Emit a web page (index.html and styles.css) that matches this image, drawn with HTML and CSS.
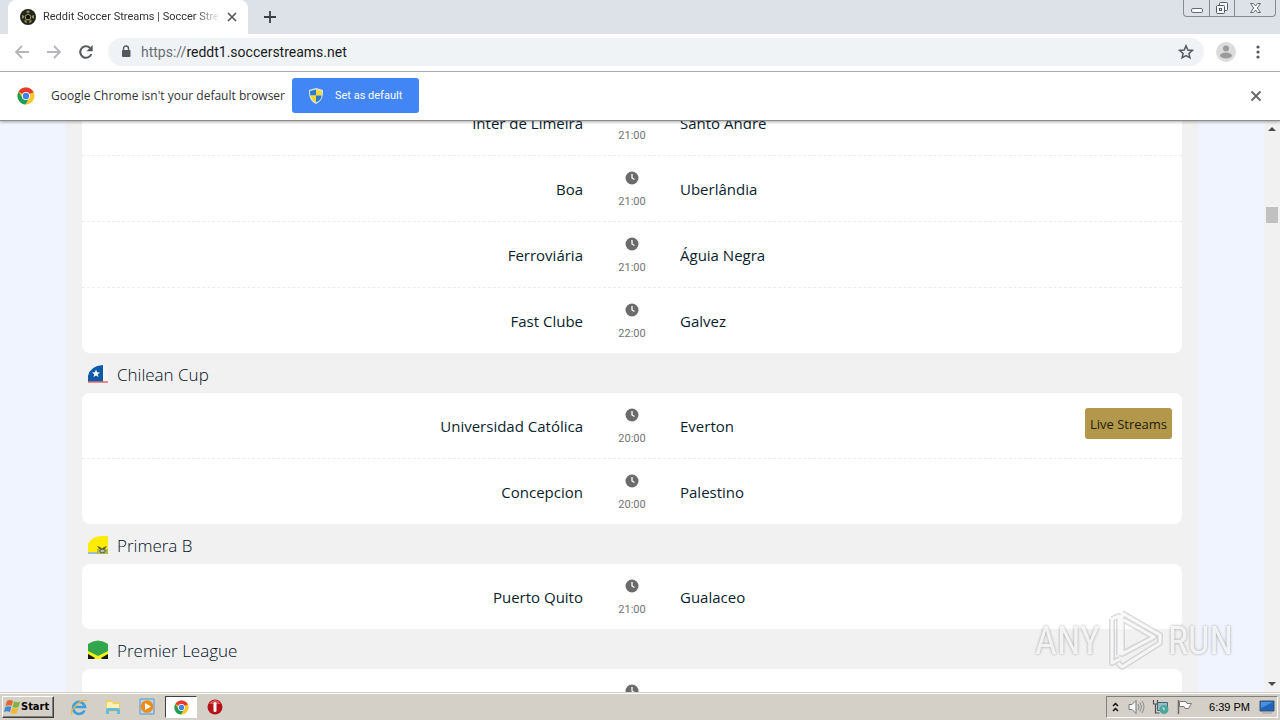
FILE: index.html
```html
<!DOCTYPE html>
<html lang="en">
<head>
<meta charset="utf-8">
<title>Reddit Soccer Streams</title>
<link rel="stylesheet" href="styles.css">
</head>
<body>
<svg class="defs" aria-hidden="true">
  <symbol id="clock" viewBox="0 0 14 14"><circle cx="7" cy="7" r="6.5" fill="#6b6b6b"/><path d="M7 3v4l2.5 1.5" fill="none" stroke="#fff" stroke-width="1.3"/></symbol>
  <symbol id="chrome" viewBox="0 0 18 18"><circle cx="9" cy="9" r="8.5" fill="#fbc52d"/><path d="M9 9L1.6 4.8A8.5 8.5 0 0 1 16.4 5z" fill="#e53a2f"/><path d="M1.6 4.8A8.5 8.5 0 0 0 8.5 17.5L12 11 5.5 11z" fill="#1d9d55"/><path d="M9 5h7.4" stroke="#e53a2f"/><circle cx="9" cy="9" r="4.1" fill="#fff"/><circle cx="9" cy="9" r="3.2" fill="#3f83ee"/></symbol>
</svg>
<div class="screen">
  <header class="tabstrip">
    <div class="tab">
      <svg width="16" height="16" viewBox="0 0 16 16"><circle cx="8" cy="8" r="8" fill="#24251d"/><g fill="#8d8b58"><path d="M8 1.500l2 1.300-2 1.400-2-1.400zM2 6l2 .8v2L2 9.800zM14 6l-2 .8v2l2 1zM4.500 11l2 .5.500 2.500-2.500-1zM11.500 11l-2 .5L9 14l2.500-1z"/></g><path d="M8 5l3 2.200-1.100 3.500H6.100L5 7.200z" fill="#111" stroke="#aaa463"/></svg>
      <span class="tab-title">Reddit Soccer Streams | Soccer Stre</span>
      <button class="icon-btn" aria-label="Close tab"><svg width="10" height="10" viewBox="0 0 10 10"><path d="M1 1l8 8M9 1L1 9" stroke="#55595d" stroke-width="1.7"/></svg></button>
    </div>
    <button class="icon-btn new-tab" aria-label="New tab"><svg width="12" height="12" viewBox="0 0 12 12"><path d="M6 0v12M0 6h12" stroke="#3c4043" stroke-width="1.8"/></svg></button>
    <div class="win-controls">
      <button aria-label="Minimize"><svg width="14" height="12" viewBox="0 0 14 12"><rect x="1.500" y="6.500" width="11" height="4" rx="1.500" fill="#fff" stroke="#666b73"/></svg></button>
      <button aria-label="Restore"><svg width="14" height="14" viewBox="0 0 14 14"><g fill="#f5f6f8" stroke="#555b66"><rect x="4.500" y="1.500" width="8" height="8" rx="1"/><rect x="1.500" y="4.500" width="8" height="8" rx="1"/><rect x="4.500" y="7.500" width="2" height="2"/></g></svg></button>
      <button class="wide" aria-label="Close"><svg width="13" height="12" viewBox="0 0 13 12"><path d="M1.500 1.500h3l2 2.500 2-2.500h3L8.300 6l3.200 4.500h-3l-2-2.500-2 2.500h-3L4.700 6z" fill="#fff" stroke="#666b73"/></svg></button>
    </div>
  </header>
  <nav class="toolbar">
    <div class="nav-buttons">
      <button class="icon-btn" aria-label="Back"><svg width="16" height="16" viewBox="0 0 16 16"><path d="M15 8H2M8 2L2 8l6 6" fill="none" stroke="#b4b6b9" stroke-width="1.8"/></svg></button>
      <button class="icon-btn" aria-label="Forward"><svg width="16" height="16" viewBox="0 0 16 16"><path d="M1 8h13M8 2l6 6-6 6" fill="none" stroke="#b4b6b9" stroke-width="1.800"/></svg></button>
      <button class="icon-btn" aria-label="Reload"><svg width="16" height="16" viewBox="0 0 16 16"><path d="M13.300 10A5.700 5.700 0 1 1 12 4" fill="none" stroke="#55595d" stroke-width="2"/><path d="M14.700 1v6.200H8.500z" fill="#55595d"/></svg></button>
    </div>
    <div class="omnibox">
      <svg width="10" height="13" viewBox="0 0 10 13"><path d="M2.500 6V3.500a2.500 2.500 0 0 1 5 0V6" fill="none" stroke="#55595d" stroke-width="1.400"/><rect x="1" y="5" width="8.500" height="7" rx="1" fill="#55595d"/></svg>
      <span class="url"><span class="scheme">https://</span>reddt1.soccerstreams.net</span>
      <button class="icon-btn" aria-label="Bookmark"><svg width="16" height="16" viewBox="0 0 16 16"><path d="M8 1.800l1.800 4.200 4.500.4-3.400 3 1 4.400L8 11.500l-3.900 2.300 1-4.400-3.400-3 4.500-.4z" fill="none" stroke="#55595d" stroke-width="1.500"/></svg></button>
    </div>
    <button class="icon-btn" aria-label="Profile"><svg width="20" height="20" viewBox="0 0 20 20"><circle cx="10" cy="10" r="10" fill="#dcdcdc"/><circle cx="10" cy="6.500" r="3" fill="#9b9b9b"/><ellipse cx="10" cy="13.500" rx="6" ry="3" fill="#9b9b9b"/></svg></button>
    <button class="icon-btn" aria-label="Menu"><svg width="4" height="16" viewBox="0 0 4 16"><g fill="#55595d"><circle cx="2" cy="3" r="1.600"/><circle cx="2" cy="8" r="1.600"/><circle cx="2" cy="13" r="1.600"/></g></svg></button>
  </nav>
  <section class="infobar">
    <svg width="18" height="18"><use href="#chrome"/></svg>
    <span class="info-text">Google Chrome isn't your default browser</span>
    <button class="set-default"><svg width="14" height="16" viewBox="0 0 14 16"><path d="M7 0l7 2c0 7-1 11-7 14C1 13 0 9 0 2z" fill="#dce7ee"/><path d="M7 1.500v6H1.300L1 3z" fill="#2f7cc6"/><path d="M7 1.500L13 3l-.3 4.500H7z" fill="#f5d936"/><path d="M7 7.500v7C3 12.500 1.800 10.500 1.300 7.500z" fill="#f5d936"/><path d="M7 7.500h5.700c-.5 3-1.700 5-5.700 7z" fill="#2f7cc6"/></svg>Set as default</button>
    <button class="icon-btn dismiss" aria-label="Dismiss"><svg width="12" height="12" viewBox="0 0 12 12"><path d="M1.500 1.500l9 9M10.500 1.500l-9 9" stroke="#66696c" stroke-width="1.900"/></svg></button>
  </section>
  <div class="viewport">
    <main class="page">
      <ul class="card first">
        <li class="match"><a class="home" href="#">Inter de Limeira</a><span class="time"><svg><use href="#clock"/></svg>21:00</span><a class="away" href="#">Santo André</a></li>
        <li class="match"><a class="home" href="#">Boa</a><span class="time"><svg><use href="#clock"/></svg>21:00</span><a class="away" href="#">Uberlândia</a></li>
        <li class="match"><a class="home" href="#">Ferroviária</a><span class="time"><svg><use href="#clock"/></svg>21:00</span><a class="away" href="#">Águia Negra</a></li>
        <li class="match"><a class="home" href="#">Fast Clube</a><span class="time"><svg><use href="#clock"/></svg>22:00</span><a class="away" href="#">Galvez</a></li>
      </ul>
      <h2><svg width="20" height="20" viewBox="0 0 20 20"><path d="M0 18V12Q2 2 15 1v17z" fill="#0c5aa8"/><path d="M8 5.500l1.100 2.700 2.900.2-2.200 1.900.7 2.800L8 11.600l-2.500 1.500.7-2.800L4 8.400l2.900-.2z" fill="#fff"/><path d="M15 0h5v18h-5z" fill="#f5f5f5"/><path d="M0 18h20" stroke="#e36a69" stroke-width="1.500"/></svg>Chilean Cup</h2>
      <ul class="card">
        <li class="match"><a class="home" href="#">Universidad Católica</a><span class="time"><svg><use href="#clock"/></svg>20:00</span><div class="away-cell"><a class="away" href="#">Everton</a><a class="live" href="#">Live Streams</a></div></li>
        <li class="match"><a class="home" href="#">Concepcion</a><span class="time"><svg><use href="#clock"/></svg>20:00</span><a class="away" href="#">Palestino</a></li>
      </ul>
      <h2><svg width="20" height="20" viewBox="0 0 20 20"><path d="M0 17V9Q4 1 14 1h6v16z" fill="#fcec08"/><path d="M0 17.500h9v1H0z" fill="#4e8aa0"/><path d="M9 14h11v5H9z" fill="#b5b848"/><path d="M9 11l3 1 2 1.500 2-1.500 3-1-2 3h-6z" fill="#766019"/><ellipse cx="14.500" cy="16" rx="2.800" ry="1.800" fill="#a4c8b1" stroke="#4d6141"/></svg>Primera B</h2>
      <ul class="card">
        <li class="match"><a class="home" href="#">Puerto Quito</a><span class="time"><svg><use href="#clock"/></svg>21:00</span><a class="away" href="#">Gualaceo</a></li>
      </ul>
      <h2><svg width="20" height="20" viewBox="0 0 20 20"><path d="M0 4Q10-2 20 4v15H0z" fill="#f7f01b"/><path d="M0 4Q10-3 20 4v7l-10 5L0 11z" fill="#31a64c"/><path d="M0 14l7 4-1 1H0zM20 14l-7 4 1 1h6z" fill="#171a12"/></svg>Premier League</h2>
      <ul class="card">
        <li class="match"><a class="home" href="#"></a><span class="time"><svg><use href="#clock"/></svg></span><a class="away" href="#"></a></li>
      </ul>
    </main>
    <div class="scrollbar"><svg width="8" height="4" viewBox="0 0 8 4"><path d="M4 0l4 4H0z" fill="#4b4b4b"/></svg><i class="thumb"></i><svg width="8" height="4" viewBox="0 0 8 4"><path d="M0 0h8L4 4z" fill="#4b4b4b"/></svg></div>
    <div class="watermark"><span>ANY</span><svg width="60" height="64" viewBox="0 0 60 64"><path d="M8 10v44l8-4M8 10l7-3v39M18 4l38 22v8L18 58l-4-4M18 4v41l32-17L20 11" fill="none" stroke="#c5c6c9" stroke-opacity=".8" stroke-width="6" stroke-linejoin="round"/><path d="M8 10v44l8-4M8 10l7-3v39M18 4l38 22v8L18 58l-4-4M18 4v41l32-17L20 11" fill="none" stroke="#fff" stroke-opacity=".85" stroke-width="3" stroke-linejoin="round"/></svg><span>RUN</span></div>
  </div>
  <footer class="taskbar">
    <button class="start"><svg width="17" height="16" viewBox="0 0 17 16"><path d="M3 2q3-2 6 0L7.500 7q-3-1.500-6 0z" fill="#e5662e"/><path d="M10 2.500q3 1.500 6 0L14.500 8q-3 1.500-6 0z" fill="#7cb342"/><path d="M1.300 8q3-1.500 6 0L6 13q-3-1.500-6 0z" fill="#428bd2"/><path d="M8.200 8.800q3 1.500 6 0L12.700 14q-3 1.500-6 0z" fill="#f3b72e"/></svg>Start</button>
    <div class="quick">
      <button aria-label="Internet Explorer"><svg width="18" height="18" viewBox="0 0 18 18"><path d="M14.500 12.500A6 6 0 1 1 15 9H5" fill="none" stroke="#3e9edb" stroke-width="2.600"/><path d="M2 16.500C-1 13 11 0 17 2.500" fill="none" stroke="#e5ba42" stroke-width="1.300"/></svg></button>
      <button aria-label="Explorer"><svg width="18" height="18" viewBox="0 0 18 18"><path d="M2 2h6l1 2h7v10H2z" fill="#efcf68"/><path d="M3 4h5l1 2h6v4H3z" fill="#fff2b9"/><path d="M2 16v-4q0-2 2-2h10q2 0 2 2v4h-3v-3H5v3z" fill="#68b9df"/></svg></button>
      <button aria-label="Media Player"><svg width="18" height="18" viewBox="0 0 18 18"><path d="M2 1h14v15H2z" fill="#b9d8ec" stroke="#5597c9"/><circle cx="9" cy="8.500" r="6.300" fill="#f18a16"/><path d="M7 5l6 3.500L7 12z" fill="#fff"/></svg></button>
      <button class="active" aria-label="Chrome"><svg width="15" height="15" viewBox="0 0 18 18"><use href="#chrome" width="18" height="18"/></svg></button>
      <button aria-label="Opera"><svg width="18" height="18" viewBox="0 0 18 18"><circle cx="9" cy="9" r="7.500" fill="#b51319"/><path d="M3 6Q9-2 15 6z" fill="#da5150"/><rect x="7.500" y="4" width="3" height="10" rx="1.500" fill="#fff"/></svg></button>
    </div>
    <div class="tray">
      <svg width="7" height="11" viewBox="0 0 7 11"><path d="M1 4l2.500-2.500L6 4M1 9l2.500-2.500L6 9" fill="none" stroke="#111" stroke-width="1.500"/></svg>
      <svg width="17" height="16" viewBox="0 0 17 16"><path d="M1 5.500h3l4-4v13l-4-4H1z" fill="#f6f6f6" stroke="#77797a"/><path d="M10 5q2 3 0 6M12 3.500q3 4.500 0 9M14 2q4 6 0 12" fill="none" stroke="#8b8d8f"/></svg>
      <svg width="17" height="16" viewBox="0 0 17 16"><path d="M5.500 3.500h10v8h-10z" fill="#93bccc" stroke="#496471"/><path d="M1.500 1v4h4V1M3.500 5v9h4" fill="none" stroke="#4d5153" stroke-width="1.200"/><circle cx="12" cy="10.500" r="4.500" fill="#4aa89c"/><path d="M10 8l3 1-1 3z" fill="#b7dfd5"/></svg>
      <svg width="17" height="16" viewBox="0 0 17 16"><path d="M2.500 1v14" stroke="#696b6c" stroke-width="1.500"/><path d="M3.500 2.500H10l1 2h4.500l-3 5H9l-1-2H3.500z" fill="#fafafa" stroke="#77797a"/></svg>
      <span class="clock">6:39 PM</span>
      <svg width="16" height="14" viewBox="0 0 16 14"><path d="M1 1h14v10H1z" fill="#1f65ba" stroke="#3c546f"/><path d="M2 2h12L2 8z" fill="#4791df"/><path d="M3 13h10" stroke="#929ca4"/></svg>
    </div>
  </footer>
</div>
</body>
</html>
```

FILE: styles.css
```css
* { box-sizing: border-box; }
body { margin: 0; font-family: Roboto, "Liberation Sans", sans-serif; color: #303236; }
button { font: inherit; color: inherit; padding: 0; border: 0; background: none; }
a { color: inherit; text-decoration: none; }
svg { display: block; flex: none; }
.defs { position: absolute; width: 0; height: 0; }
.screen { height: 100vh; display: flex; flex-direction: column; overflow: hidden; background: #fff; }
.icon-btn { display: grid; place-items: center; flex: none; }

.tabstrip { flex: none; height: 34px; display: flex; align-items: center; padding-left: 8px; background: #dde1e8; }
.tab { width: 240px; height: 34px; display: flex; align-items: center; gap: 7px; padding: 0 11px 0 12px; background: #fff; border-radius: 8px 8px 0 0; }
.tab-title { flex: 1; overflow: hidden; white-space: nowrap; font-size: 11px; line-height: 16px; -webkit-mask-image: linear-gradient(to right, #000 86%, transparent); mask-image: linear-gradient(to right, #000 86%, transparent); }
.new-tab { margin-left: 16px; }
.win-controls { align-self: flex-start; margin: 0 4px 0 auto; display: flex; border: 1px solid #858a93; border-top: 0; border-radius: 0 0 4px 4px; }
.win-controls button { width: 25px; height: 16px; display: grid; place-items: center; }
.win-controls button + button { border-left: 1px solid #858a93; }
.win-controls .wide { width: 41px; }

.toolbar { flex: none; height: 38px; display: flex; align-items: center; gap: 12px; padding: 0 20px 2px 14px; border-bottom: 1px solid #b4b6b8; }
.nav-buttons { display: flex; gap: 16px; margin-right: 2px; }
.toolbar > .icon-btn:last-child { margin-left: 8px; }
.omnibox { flex: 1; height: 28px; display: flex; align-items: center; padding: 0 10px 0 13px; gap: 10px; border-radius: 14px; background: #f0f3f6; }
.url { flex: 1; font-size: 14px; line-height: 20px; color: #181b20; }
.scheme { color: #696e74; }

.infobar { flex: none; height: 49px; display: flex; align-items: center; padding: 0 18px 1px 17px; background: #fff; border-bottom: 1px solid #8d8d8d; box-shadow: 0 1px 3px #0005; z-index: 1; }
.info-text { flex: 0 0 241px; margin-left: 16px; font: 12px/18px "Open Sans", sans-serif; }
.set-default { width: 127px; height: 35px; display: flex; align-items: center; gap: 12px; padding-left: 17px; border-radius: 3px; background: #4285f4; color: #fff; font-size: 11px; }
.dismiss { margin-left: auto; }

.viewport { position: relative; flex: 1; min-height: 0; display: flex; overflow: hidden; background: #f0f4fe; }
.page { flex: 1; align-self: flex-start; margin: -31px 66px 0; padding: 0 16px; background: #f1f1f1; font-family: "Open Sans", "Noto Sans", sans-serif; color: #0b1e2e; }
.card { margin: 0; padding: 0; list-style: none; background: #fff; border-radius: 8px; }
.card.first { border-radius: 0 0 8px 8px; }
.match { display: grid; grid-template-columns: 1fr 97px 1fr; align-items: center; height: 65px; padding: 0 11px 0 10px; font-size: 15px; line-height: 22px; }
.match + .match { height: 66px; border-top: 1px dashed #ededed; }
.home { text-align: right; }
.time { display: flex; flex-direction: column; align-items: center; gap: 9px; min-height: 43px; padding: 4px 0 0 1px; font: 11px/16px Roboto, sans-serif; color: #737373; }
.time svg { width: 14px; height: 14px; }
.away-cell { display: flex; align-items: center; justify-content: space-between; }
.live { padding: 1px 5px 0; height: 31px; margin: 0 -1px 4px 0; line-height: 31px; font-size: 13px; color: #20200e; background: #b3984b; border-radius: 3px; }
h2 { display: flex; align-items: center; gap: 9px; height: 40px; margin: 0; padding: 3px 6px 0; font-size: 17px; line-height: 24px; font-weight: 300; color: #00101f; }
h2 svg { margin-bottom: 2px; }

.scrollbar { flex: none; width: 16px; display: flex; flex-direction: column; align-items: center; padding: 6px 0; background: #f1f1f1; }
.thumb { width: 12px; height: 16px; margin: 76px 0 auto; background: #c1c1c1; }
.watermark { position: absolute; right: 47px; bottom: 19px; display: flex; align-items: center; gap: 4px; font: 38px/44px "Liberation Sans Narrow", "Roboto Condensed", "DejaVu Sans Condensed", sans-serif; color: #fffd; text-shadow: 0 0 3px #888; opacity: .8; }

.taskbar { flex: none; height: 28px; display: flex; align-items: center; padding: 1px 2px 0; background: #d4d0c8; border-top: 1px solid #d4d0c8; box-shadow: inset 0 1px #fff; }
.start { width: 52px; height: 22px; display: flex; align-items: center; gap: 0; padding-left: 1px; font: bold 11px/16px "DejaVu Sans Condensed", sans-serif; color: #000; border: 1px solid; border-color: #fff #404040 #404040 #fff; box-shadow: inset -1px -1px #808080; }
.quick { display: flex; margin-left: 9px; gap: 2px; }
.quick button { width: 32px; height: 22px; display: grid; place-items: center; }
.quick .active { border: 1px solid; border-color: #404040 #fff #fff #404040; background: #fff; }
.tray { margin-left: auto; height: 22px; display: flex; align-items: center; gap: 7px; padding: 0 2px 0 5px; border: 1px solid; border-color: #808080 #fff #fff #808080; }
.tray svg:nth-child(2) { margin-left: 2px; }
.clock { margin: 0 2px 0 9px; font: 11px/16px "Liberation Sans", sans-serif; color: #000; }
```
